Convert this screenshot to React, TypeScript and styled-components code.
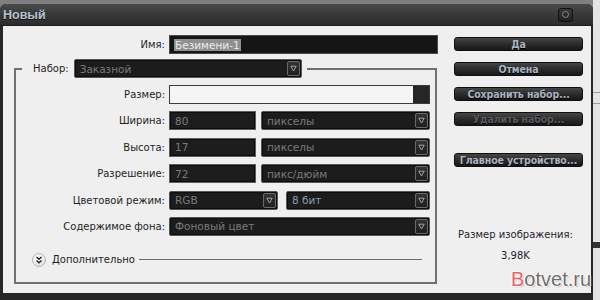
import React from 'react';
import styled, { createGlobalStyle } from 'styled-components';

const Global = createGlobalStyle`
  html, body { margin: 0; padding: 0; background: #7f7f7f; }
  body { font-family: "DejaVu Sans", "Liberation Sans", sans-serif; }
`;

const Screen = styled.div`
  position: relative;
  width: 600px;
  height: 300px;
  overflow: hidden;
  display: flex;
  background: #808080;
`;

const Window = styled.div`
  width: 593px;
  height: 296px;
  margin-top: 4px;
  display: flex;
  flex-direction: column;
  background: #262626;
  border-radius: 6px 6px 0 0;
  overflow: hidden;
  box-sizing: border-box;
  padding-bottom: 7px;
`;

const SideStrip = styled.div`
  flex: 1;
  background: #e4e4e4;
  display: flex;
  flex-direction: column;
`;

const StripLine = styled.div<{ $top: number; $h: number; $c: string }>`
  margin-top: ${(p) => p.$top}px;
  height: ${(p) => p.$h}px;
  background: ${(p) => p.$c};
`;

const TitleBar = styled.div`
  height: 22px;
  flex: none;
  display: flex;
  align-items: center;
  justify-content: space-between;
  padding: 0 20px 0 3px;
  background: linear-gradient(#4a4a4a 0%, #3a3a3a 45%, #2c2c2c 100%);
  border-bottom: 1px solid #1b1b1b;
  box-sizing: border-box;
`;

const Title = styled.span`
  font-family: "Liberation Sans", Arial, sans-serif;
  font-weight: bold;
  font-size: 12.5px;
  color: #b8c2cd;
  text-shadow: 0 1px 0 #111;
`;

const CloseBtn = styled.div`
  width: 15px;
  height: 14px;
  box-sizing: border-box;
  border: 1px solid #111;
  border-radius: 3px;
  background: linear-gradient(#3a3a3a, #202020);
  display: flex;
  align-items: center;
  justify-content: center;
  &::after {
    content: '';
    width: 5px;
    height: 5px;
    border-radius: 50%;
    border: 1px solid #8a8a8a;
    background: #2a2a2a;
  }
`;

const Body = styled.div`
  flex: 1;
  margin: 0 2px 0 3px;
  background: #efefef;
  display: flex;
`;

const FormCol = styled.div`
  width: 435px;
  padding-top: 9px;
  display: flex;
  flex-direction: column;
`;

const NameRow = styled.div`
  display: grid;
  grid-template-columns: 162px 269px;
  column-gap: 4px;
  align-items: center;
  height: 19px;
`;

const Label = styled.span`
  font-size: 10px;
  color: #1e1e1e;
  text-align: right;
  white-space: nowrap;
`;

const NameInput = styled.div`
  height: 19px;
  box-sizing: border-box;
  background: #151515;
  border: 1px solid #4a4a4a;
  display: flex;
  align-items: center;
  padding-left: 4px;
`;

const Selected = styled.span`
  background: #8f8f8f;
  color: #ececec;
  font-size: 10.5px;
  line-height: 12px;
  padding: 0 1px;
`;

const Group = styled.fieldset`
  margin: 5px 0 0 11px;
  width: 423px;
  box-sizing: border-box;
  border: 2px solid #707070;
  padding: 7px 0 15px 0;
  min-inline-size: 0;
`;

const Legend = styled.legend`
  margin-left: 6px;
  padding: 0 5px 0 11px;
  display: flex;
  align-items: center;
  gap: 5px;
`;

const FieldGrid = styled.div`
  display: grid;
  grid-template-columns: 149px 261px;
  column-gap: 4px;
  row-gap: 7.4px;
  align-items: center;
`;

const Pair = styled.div<{ $gap: number }>`
  display: flex;
  gap: ${(p) => p.$gap}px;
`;

const DarkInput = styled.div<{ $w: number }>`
  width: ${(p) => p.$w}px;
  height: 19px;
  flex: none;
  box-sizing: border-box;
  background: #1d1d1d;
  border: 1px solid #5e5e5e;
  box-shadow: inset 0 0 0 1px #0c0c0c;
  display: flex;
  align-items: center;
  padding-left: 5px;
  font-size: 10.5px;
  color: #7c7c7c;
`;

const SelectBox = styled.div<{ $w?: number; $light?: boolean }>`
  ${(p) => (p.$w ? `width: ${p.$w}px; flex: none;` : 'flex: 1;')}
  height: 19px;
  box-sizing: border-box;
  background: #1c1c1c;
  border: 1px solid #575757;
  border-radius: 2px;
  box-shadow: inset 0 0 0 1px #0d0d0d;
  display: flex;
  align-items: center;
  padding: 0 1px 0 5px;
  font-size: 10.5px;
  color: ${(p) => (p.$light ? '#8e9bb0' : '#7a7a7a')};
`;

const Value = styled.span`
  flex: 1;
  white-space: nowrap;
  overflow: hidden;
`;

const Arrow = styled.div`
  width: 13px;
  height: 15px;
  box-sizing: border-box;
  border: 1px solid #6a6a6a;
  border-radius: 2px;
  background: linear-gradient(#343434, #1e1e1e);
  display: flex;
  align-items: center;
  justify-content: center;
`;

const SizeInput = styled.div`
  height: 19px;
  box-sizing: border-box;
  background: #f5f5f5;
  border: 1px solid #3c3c3c;
  display: flex;
  justify-content: flex-end;
`;

const SizeTrigger = styled.div`
  width: 16px;
  background: #262626;
`;

const MoreRow = styled.div`
  margin-top: 17px;
  padding-left: 16px;
  display: flex;
  align-items: center;
  height: 14px;
`;

const MoreIcon = styled.div`
  width: 14px;
  height: 14px;
  box-sizing: border-box;
  border-radius: 50%;
  border: 1px solid #b8b8b8;
  background: radial-gradient(circle at 40% 35%, #ffffff, #d8d8d8);
  display: flex;
  align-items: center;
  justify-content: center;
  margin-right: 6px;
`;

const MoreText = styled.span`
  font-size: 10px;
  color: #1e1e1e;
`;

const MoreLine = styled.div`
  flex: 1;
  height: 1px;
  background: #6a6a6a;
  margin: 0 13px 0 4px;
`;

const ButtonCol = styled.div`
  width: 129px;
  margin-left: 16px;
  padding-top: 11px;
  display: flex;
  flex-direction: column;
  align-items: stretch;
`;

const Btn = styled.div<{ $disabled?: boolean; $mt?: number }>`
  height: 14px;
  margin-top: ${(p) => p.$mt ?? 11}px;
  box-sizing: border-box;
  border: 1px solid #0f0f0f;
  border-radius: 3px;
  background: linear-gradient(#464646 0%, #2e2e2e 45%, #181818 100%);
  display: flex;
  align-items: center;
  justify-content: center;
  font-family: "DejaVu Sans Condensed", "Liberation Sans Narrow", "DejaVu Sans", sans-serif;
  font-size: 10.5px;
  font-weight: bold;
  letter-spacing: -0.1px;
  color: ${(p) => (p.$disabled ? '#575b60' : '#aab4c0')};
  text-shadow: 0 1px 0 #000;
  white-space: nowrap;
`;

const Info = styled.div`
  margin-top: 61px;
  display: flex;
  flex-direction: column;
  align-items: center;
  gap: 7px;
  font-size: 10px;
  color: #1e1e2a;
  line-height: 14px;
  padding-right: 6px;
`;

const Watermark = styled.div`
  position: absolute;
  left: 511px;
  top: 268px;
  font-family: "Liberation Sans", Arial, sans-serif;
  font-size: 20px;
  color: #6e6e6e;
  text-shadow: 1px 0 0 #fff, -1px 0 0 #fff, 0 1px 0 #fff, 0 -1px 0 #fff, 1px 1px 1px #999;
`;

const Red = styled.span`
  color: #e8606a;
`;

const Tri = () => (
  <svg width="7" height="7" viewBox="0 0 7 7">
    <path d="M0.8 1.2 H6.2 L3.5 6 Z" fill="none" stroke="#a0a0a0" strokeWidth="1" />
  </svg>
);

const Chevrons = () => (
  <svg width="8" height="8" viewBox="0 0 8 8">
    <path d="M1.5 1 L4 3.3 L6.5 1 M1.5 4.5 L4 6.8 L6.5 4.5" fill="none" stroke="#222" strokeWidth="1.4" />
  </svg>
);

const Select: React.FC<{ value: string; w?: number; light?: boolean }> = ({ value, w, light }) => (
  <SelectBox $w={w} $light={light}>
    <Value>{value}</Value>
    <Arrow>
      <Tri />
    </Arrow>
  </SelectBox>
);

export default function App() {
  return (
    <Screen>
      <Global />
      <Window>
        <TitleBar>
          <Title>Новый</Title>
          <CloseBtn />
        </TitleBar>
        <Body>
          <FormCol>
            <NameRow>
              <Label>Имя:</Label>
              <NameInput>
                <Selected>Безимени-1</Selected>
              </NameInput>
            </NameRow>
            <Group>
              <Legend>
                <Label>Набор:</Label>
                <Select value="Заказной" w={228} />
              </Legend>
              <FieldGrid>
                <Label>Размер:</Label>
                <SizeInput>
                  <SizeTrigger />
                </SizeInput>

                <Label>Ширина:</Label>
                <Pair $gap={5}>
                  <DarkInput $w={87}>80</DarkInput>
                  <Select value="пикселы" />
                </Pair>

                <Label>Высота:</Label>
                <Pair $gap={5}>
                  <DarkInput $w={87}>17</DarkInput>
                  <Select value="пикселы" />
                </Pair>

                <Label>Разрешение:</Label>
                <Pair $gap={5}>
                  <DarkInput $w={87}>72</DarkInput>
                  <Select value="пикс/дюйм" />
                </Pair>

                <Label>Цветовой режим:</Label>
                <Pair $gap={8}>
                  <Select value="RGB" w={109} />
                  <Select value="8 бит" light />
                </Pair>

                <Label>Содержимое фона:</Label>
                <Select value="Фоновый цвет" />
              </FieldGrid>
              <MoreRow>
                <MoreIcon>
                  <Chevrons />
                </MoreIcon>
                <MoreText>Дополнительно</MoreText>
                <MoreLine />
              </MoreRow>
            </Group>
          </FormCol>
          <ButtonCol>
            <Btn $mt={0}>Да</Btn>
            <Btn>Отмена</Btn>
            <Btn>Сохранить набор...</Btn>
            <Btn $disabled>Удалить набор...</Btn>
            <Btn $mt={27}>Главное устройство...</Btn>
            <Info>
              <span>Размер изображения:</span>
              <span>3,98K</span>
            </Info>
          </ButtonCol>
        </Body>
      </Window>
      <SideStrip>
        <StripLine $top={92} $h={1} $c="#9a9a9a" />
        <StripLine $top={10} $h={1} $c="#9a9a9a" />
        <StripLine $top={138} $h={6} $c="#333" />
      </SideStrip>
      <Watermark>
        <Red>B</Red>otvet.ru
      </Watermark>
    </Screen>
  );
}
